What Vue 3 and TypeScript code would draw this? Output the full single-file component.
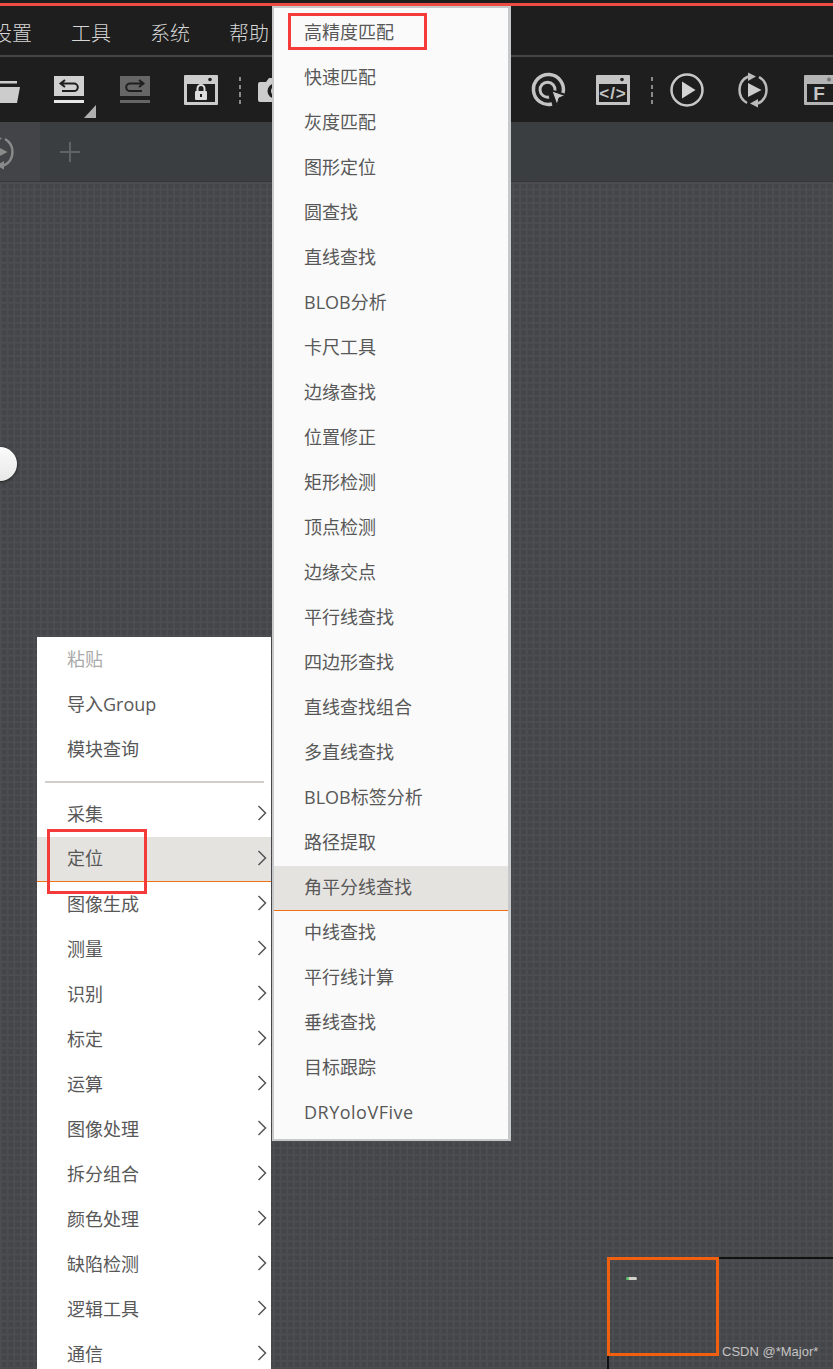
<script setup lang="ts">
const leftTop: string[] = ['导入Group', '模块查询']
const leftSub: string[] = ['采集', '定位', '图像生成', '测量', '识别', '标定', '运算', '图像处理', '拆分组合', '颜色处理', '缺陷检测', '逻辑工具', '通信']
const rightItems: string[] = ['高精度匹配', '快速匹配', '灰度匹配', '图形定位', '圆查找', '直线查找', 'BLOB分析', '卡尺工具', '边缘查找', '位置修正', '矩形检测', '顶点检测', '边缘交点', '平行线查找', '四边形查找', '直线查找组合', '多直线查找', 'BLOB标签分析', '路径提取', '角平分线查找', '中线查找', '平行线计算', '垂线查找', '目标跟踪', 'DRYoloVFive']
</script>

<template>
  <div class="page">
    <div class="strip"></div>
    <div class="red-line"></div>
    <nav class="menubar">
      <span>设置</span><span>工具</span><span>系统</span><span>帮助</span>
    </nav>
    <div class="toolbar">
      <svg class="ic folder" width="20" height="24" viewBox="0 0 20 24">
        <path d="M-4 1h21v2.500H-4z" fill="#ccc" />
        <path d="M-4 7H20L17 23H-4z" fill="#ccc" />
      </svg>
      <div class="undo-wrap">
        <svg class="ic" width="30" height="28" viewBox="0 0 30 28">
          <rect y="0" width="30" height="20" fill="#d0d0d0" />
          <rect y="24" width="30" height="3" fill="#e8e8e8" />
          <path d="M11 4 6.500 7.500 11 11M7 7.500H20a3.800 3.800 0 0 1 0 7.600H8" fill="none" stroke="#1e1e1e" stroke-width="2" />
        </svg>
        <span class="corner"></span>
      </div>
      <svg class="ic redo" width="30" height="28" viewBox="0 0 30 28">
        <rect y="0" width="30" height="20" fill="#666" />
        <rect y="24" width="30" height="3" fill="#666" />
        <path d="M19 4 23.500 7.500 19 11M23 7.500H10a3.800 3.800 0 0 0 0 7.600H22" fill="none" stroke="#1e1e1e" stroke-width="2" />
      </svg>
      <svg class="ic lockwin" width="34" height="30" viewBox="0 0 34 30">
        <rect width="34" height="30" rx="1" fill="#ccc" />
        <rect x="3" y="9" width="28" height="18" fill="#1e1e1e" />
        <circle cx="26" cy="4.500" r="1.800" fill="#1e1e1e" />
        <rect x="11" y="16" width="12" height="9" rx="1" fill="#ddd" />
        <path d="M13.500 16v-2.500a3.500 3.500 0 0 1 7 0V16" fill="none" stroke="#ddd" stroke-width="2" />
        <rect x="16" y="19" width="2" height="3" fill="#1e1e1e" />
      </svg>
      <span class="dash d1"></span>
      <svg class="ic camera" width="34" height="28" viewBox="0 0 34 28">
        <path d="M2 6h6l3-4h12l3 4h6a2 2 0 0 1 2 2v16a2 2 0 0 1-2 2H2a2 2 0 0 1-2-2V8a2 2 0 0 1 2-2z" fill="#ccc" />
        <circle cx="17" cy="15" r="7.500" fill="#1e1e1e" />
        <circle cx="17" cy="15" r="4" fill="#ccc" />
      </svg>
      <svg class="ic target" width="34" height="34" viewBox="0 0 34 34">
        <path d="M31 20A15 15 0 1 0 20 31" fill="none" stroke="#c4c4c4" stroke-width="3.500" />
        <path d="M23 17.500A7.500 7.500 0 1 0 17 24" fill="none" stroke="#c4c4c4" stroke-width="3" />
        <path d="M20 18 33 22.500 27 25 25 32z" fill="#ccc" stroke="#1e1e1e" stroke-width="1" />
      </svg>
      <svg class="ic codewin" width="34" height="30" viewBox="0 0 34 30">
        <rect width="34" height="30" rx="1" fill="#c4c4c4" />
        <rect x="3" y="9" width="28" height="18" fill="#1e1e1e" />
        <circle cx="26" cy="4.500" r="1.800" fill="#1e1e1e" />
        <text x="17" y="23.500" text-anchor="middle" class="code-t">&lt;/&gt;</text>
      </svg>
      <span class="dash d2"></span>
      <svg class="ic play" width="34" height="34" viewBox="0 0 34 34">
        <circle cx="17" cy="17" r="15.500" fill="none" stroke="#c8c8c8" stroke-width="2.500" />
        <path d="M12 8.500 25.500 17 12 25.500z" fill="#d4d4d4" />
      </svg>
      <svg class="ic loop" width="34" height="34" viewBox="0 0 34 34">
        <path d="M11 30A15 15 0 0 1 12 3.500" fill="none" stroke="#bbb" stroke-width="2.500" />
        <path d="M23 4A15 15 0 0 1 22 30.500" fill="none" stroke="#bbb" stroke-width="2.500" />
        <path d="M12 -0.500 20 3.500 12 8z M22 26 14 30.500 22 34.500z" fill="#bbb" />
        <path d="M12 10 25.500 17 12 24z" fill="#ccc" />
      </svg>
      <svg class="ic fwin" width="34" height="30" viewBox="0 0 34 30">
        <rect width="34" height="30" rx="1" fill="#b4b4b4" />
        <rect x="3" y="9" width="28" height="18" fill="#1e1e1e" />
        <circle cx="25" cy="4.500" r="2" fill="#777" />
        <text x="15" y="25" text-anchor="middle" class="f-t">F</text>
      </svg>
    </div>
    <div class="tabs">
      <div class="tab">
        <svg width="34" height="34" viewBox="0 0 34 34">
          <path d="M23 4A15 15 0 0 1 22 30.500" fill="none" stroke="#8a8a8a" stroke-width="2.500" />
          <path d="M11 30A15 15 0 0 1 12 3.500" fill="none" stroke="#8a8a8a" stroke-width="2.500" />
          <path d="M12 -0.500 20 3.500 12 8z M22 26 14 30.500 22 34.500z" fill="#8a8a8a" />
          <path d="M12 10 25.500 17 12 24z" fill="#8a8a8a" />
        </svg>
      </div>
      <div class="plus">
        <svg width="22" height="22" viewBox="0 0 22 22"><path d="M11 1v20M1 11h20" stroke="#5f6367" stroke-width="2" /></svg>
      </div>
    </div>
    <div class="canvas">
      <div class="knob"></div>
      <div class="mini">
        <span class="mini-dot"></span>
      </div>
      <div class="mini-line-h"></div>
      <div class="mini-line-v"></div>
      <span class="mark">CSDN @*Major*</span>
    </div>

    <ul class="menu left">
      <li class="item disabled">粘贴</li>
      <li v-for="t in leftTop" :key="t" class="item">{{ t }}</li>
      <li class="sep"></li>
      <li v-for="t in leftSub" :key="t" class="item sub" :class="{ active: t === '定位' }">
        <span>{{ t }}</span>
        <svg width="10" height="16" viewBox="0 0 10 16"><path d="M1.500 1 8.500 8 1.500 15" fill="none" stroke="#555" stroke-width="1.500" /></svg>
      </li>
    </ul>

    <ul class="menu right">
      <li v-for="t in rightItems" :key="t" class="item" :class="{ active: t === '角平分线查找', wide: t === 'DRYoloVFive' }">{{ t }}</li>
    </ul>

    <div class="note note-a"></div>
    <div class="note note-b"></div>
  </div>
</template>

<style>
html, body { margin: 0; background: #444548; }
</style>

<style scoped>
.page {
  position: relative;
  width: 833px;
  height: 1369px;
  overflow: hidden;
  display: flex;
  flex-direction: column;
  font-family: "Open Sans", "Noto Sans CJK SC", sans-serif;
}
.strip { height: 3px; background: #1e1e1e; flex: none; }
.red-line { height: 3px; background: #ee4b42; flex: none; }
.menubar {
  flex: none;
  height: 49px;
  box-sizing: border-box;
  background: #1e1e1e;
  display: flex;
  align-items: center;
  gap: 39px;
  margin-left: -8px;
  padding-top: 4px;
  color: #d6d6d6;
  font-size: 20px;
  font-weight: 300;
}
.toolbar {
  flex: none;
  height: 67px;
  box-sizing: border-box;
  background: #1e1e1e;
  border-top: 2px solid #444446;
  display: flex;
  align-items: flex-start;
}
.ic { display: block; flex: none; overflow: visible; }
.folder { margin-top: 23px; }
.undo-wrap { position: relative; margin-left: 34px; margin-top: 19px; }
.corner {
  position: absolute;
  left: 30px;
  top: 29px;
  width: 12px;
  height: 13px;
  background: #b0b0b0;
  clip-path: polygon(100% 0, 100% 100%, 0 100%);
}
.redo { margin-left: 36px; margin-top: 19px; }
.lockwin { margin-left: 34px; margin-top: 18px; }
.dash {
  flex: none;
  width: 2px;
  height: 28px;
  margin-top: 20px;
  background: repeating-linear-gradient(to bottom, #8a8a8a 0 4.300px, transparent 4.300px 7.700px);
}
.d1 { margin-left: 21px; }
.camera { margin-left: 17px; margin-top: 19px; }
.target { margin-left: 240px; margin-top: 16px; }
.codewin { margin-left: 30px; margin-top: 18px; }
.d2 { margin-left: 21px; }
.play { margin-left: 17px; margin-top: 16px; }
.loop { margin-left: 32px; margin-top: 16px; }
.fwin { margin-left: 34px; margin-top: 18px; }
.code-t { font: 700 17px "Liberation Sans", sans-serif; letter-spacing: 1px; fill: #c4c4c4; }
.f-t { font: 700 19px "Liberation Sans", sans-serif; fill: #c4c4c4; }
.tabs {
  flex: none;
  height: 60px;
  box-sizing: border-box;
  background: #3b3e41;
  border-bottom: 1px solid #343638;
  display: flex;
}
.tab {
  width: 40px;
  background: #424447;
  display: flex;
  align-items: center;
  flex: none;
  overflow: hidden;
}
.tab svg { flex: none; margin-left: -18px; overflow: visible; }
.plus { display: flex; align-items: center; margin-left: 19px; }
.canvas {
  flex: 1;
  position: relative;
  background-color: #444548;
  background-image:
    linear-gradient(to right, #4c4d50 0 1.500px, transparent 1.500px),
    linear-gradient(to bottom, #4c4d50 0 1.500px, transparent 1.500px);
  background-size: 6.67px 6.67px;
}
.knob {
  position: absolute;
  left: -17px;
  top: 265px;
  width: 34px;
  height: 34px;
  border-radius: 50%;
  background: linear-gradient(#fbfbfb, #e8e8e8);
  box-shadow: 0 1px 3px rgba(0, 0, 0, 0.6);
}
.mini {
  position: absolute;
  left: 607px;
  top: 1075px;
  width: 112px;
  height: 99px;
  box-sizing: border-box;
  border: 3px solid #f1600f;
}
.mini-dot {
  position: absolute;
  left: 16px;
  top: 17px;
  width: 11px;
  height: 3px;
  border-radius: 2px;
  background: linear-gradient(to right, #5fc46e 0 25%, #d2d2c8 25%);
}
.mini-line-h {
  position: absolute;
  left: 719px;
  top: 1075px;
  right: 0;
  height: 2px;
  background: #111;
}
.mini-line-v {
  position: absolute;
  left: 607px;
  top: 1174px;
  bottom: 0;
  width: 2px;
  background: #111;
}
.mark {
  position: absolute;
  left: 722px;
  top: 1162px;
  font: 13px/16px "Liberation Sans", sans-serif;
  color: #c4c4c4;
}
.menu {
  position: absolute;
  margin: 0;
  list-style: none;
  font-size: 18px;
  font-weight: 400;
  color: #585858;
}
.left {
  left: 37px;
  top: 637px;
  width: 234px;
  padding: 1px 0 0;
  background: #fff;
}
.right {
  left: 272px;
  top: 6px;
  width: 239px;
  box-sizing: border-box;
  padding: 3px 0;
  background: #fafafa;
  border: 2px solid #c6c8ca;
  border-right-width: 3px;
}
.item {
  box-sizing: border-box;
  height: 45px;
  line-height: 43px;
  padding-left: 30px;
  padding-bottom: 1px;
  white-space: nowrap;
}
.wide { letter-spacing: 0.5px; }
.disabled { color: #aaa; }
.sep {
  height: 19px;
  margin: 0 7px 0 8px;
  background: linear-gradient(#d2cfca, #d2cfca) center 8px / 100% 2px no-repeat;
}
.sub {
  display: flex;
  align-items: center;
  justify-content: space-between;
  padding-right: 4px;
}
.sub svg { margin-bottom: 2px; }
.active {
  background: #e5e3e0;
  border-bottom: 1px solid #f07014;
}
.note {
  position: absolute;
  box-sizing: border-box;
  border: 3px solid #f53a3a;
}
.note-a { left: 288px; top: 13px; width: 139px; height: 37px; }
.note-b { left: 47px; top: 829px; width: 100px; height: 65px; }
</style>
